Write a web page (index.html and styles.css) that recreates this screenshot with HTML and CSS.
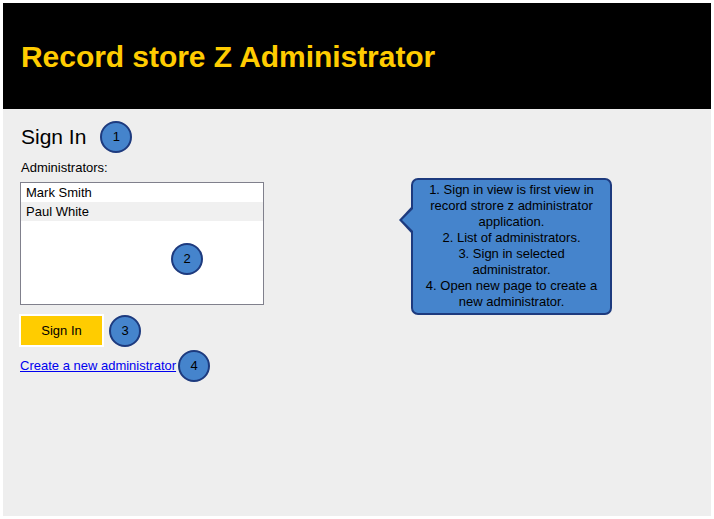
FILE: index.html
```html
<!DOCTYPE html>
<html>
<head>
<meta charset="utf-8">
<link rel="stylesheet" href="styles.css">
</head>
<body>
<div class="frame">
  <header class="header">
    <h1 class="title">Record store Z Administrator</h1>
  </header>
  <main class="content">
    <div class="heading-row">
      <h2 class="heading">Sign In</h2>
      <span class="badge badge-inline">1</span>
    </div>
    <div class="label">Administrators:</div>
    <div class="listbox">
      <div class="item">Mark Smith</div>
      <div class="item item-alt">Paul White</div>
      <span class="badge badge-list">2</span>
    </div>
    <div class="button-row">
      <button class="btn">Sign In</button>
      <span class="badge badge-btn">3</span>
    </div>
    <div class="link-row">
      <a class="link" href="#">Create a new administrator</a>
      <span class="badge badge-link">4</span>
    </div>
    <div class="callout">
      1. Sign in view is first view in<br>
      record strore z administrator<br>
      application.<br>
      2. List of administrators.<br>
      3. Sign in selected<br>
      administrator.<br>
      4. Open new page to create a<br>
      new administrator.
    </div>
  </main>
</div>
</body>
</html>
```
FILE: styles.css
```css
html, body {
  margin: 0;
  padding: 0;
  background: #ffffff;
}
body {
  font-family: "Liberation Sans", Arial, sans-serif;
  color: #000;
}
.frame {
  margin: 3px 0 0 3px;
  width: 708px;
  height: 513px;
  background: #eeeeee;
  display: flex;
  flex-direction: column;
}
.header {
  background: #000;
  height: 106px;
  display: flex;
  align-items: center;
  padding-left: 18px;
  flex-shrink: 0;
}
.title {
  margin: 0;
  color: #ffcc00;
  font-size: 30px;
  font-weight: bold;
  line-height: 34px;
  padding-top: 1px;
  letter-spacing: -0.05px;
}
.content {
  position: relative;
  flex: 1;
  padding: 12px 0 0 17px;
}
.heading-row {
  display: flex;
  align-items: center;
  height: 32px;
}
.heading {
  margin: 0 0 0 1px;
  font-size: 21px;
  font-weight: normal;
  line-height: 24px;
}
.badge {
  width: 28px;
  height: 28px;
  border: 2px solid #1d3a7e;
  border-radius: 50%;
  background: #4584cc;
  color: #000;
  font-size: 13px;
  line-height: 28px;
  text-align: center;
  flex-shrink: 0;
}
.badge-inline {
  margin-left: 14px;
}
.label {
  margin-top: 7px;
  margin-left: 1px;
  font-size: 13px;
  line-height: 16px;
}
.listbox {
  position: relative;
  margin-top: 6px;
  width: 242px;
  height: 121px;
  border: 1px solid #80808c;
  background: #fff;
}
.item {
  height: 19px;
  line-height: 19px;
  font-size: 13px;
  padding-left: 5px;
}
.item-alt {
  background: #f0f0f0;
}
.badge-list {
  position: absolute;
  left: 150px;
  top: 60px;
}
.button-row {
  display: flex;
  align-items: center;
  margin-top: 9px;
  margin-left: -1px;
}
.btn {
  width: 85px;
  height: 33px;
  border: 2px solid #fff;
  background: #ffcc00;
  font-family: "Liberation Sans", Arial, sans-serif;
  font-size: 13px;
  color: #000;
  padding: 0;
}
.badge-btn {
  margin-left: 5px;
}
.link-row {
  display: flex;
  align-items: center;
  margin-top: 3px;
}
.link {
  color: #0000ee;
  font-size: 13px;
  line-height: 16px;
  text-decoration: underline;
}
.badge-link {
  margin-left: 2px;
}
.callout {
  position: absolute;
  left: 408px;
  top: 69px;
  width: 201px;
  height: 137px;
  border: 2px solid #1d3a7e;
  border-radius: 7px;
  background: #4584cc;
  font-size: 13px;
  line-height: 16px;
  text-align: center;
  padding-top: 2px;
  box-sizing: border-box;
}
.callout::before {
  content: "";
  position: absolute;
  left: -14px;
  top: 25px;
  border-right: 14px solid #1d3a7e;
  border-top: 15px solid transparent;
  border-bottom: 15px solid transparent;
}
.callout::after {
  content: "";
  position: absolute;
  left: -11px;
  top: 27px;
  border-right: 13px solid #4584cc;
  border-top: 13px solid transparent;
  border-bottom: 13px solid transparent;
}
```
